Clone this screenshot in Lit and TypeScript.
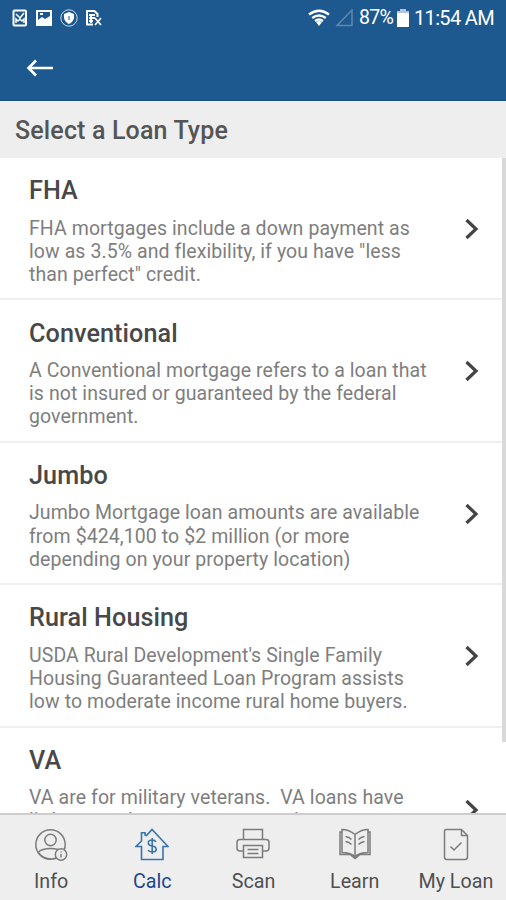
import { LitElement, html, css, svg } from "lit";
import { customElement } from "lit/decorators.js";

interface Loan { name: string; lines: string[]; }

const loans: Loan[] = [
  { name: "FHA", lines: ["FHA mortgages include a down payment as", "low as 3.5% and flexibility, if you have \"less", "than perfect\" credit."] },
  { name: "Conventional", lines: ["A Conventional mortgage refers to a loan that", "is not insured or guaranteed by the federal", "government."] },
  { name: "Jumbo", lines: ["Jumbo Mortgage loan amounts are available", "from $424,100 to $2 million (or more", "depending on your property location)"] },
  { name: "Rural Housing", lines: ["USDA Rural Development's Single Family", "Housing Guaranteed Loan Program assists", "low to moderate income rural home buyers."] },
  { name: "VA", lines: ["VA are for military veterans.\u00a0 VA loans have", "little or no down payment requirements"] },
];

const tabs = [
  { label: "Info", icon: svg`<circle cx="16.5" cy="16.5" r="14.7"/><circle cx="16.5" cy="12" r="5.7"/><path d="M4 24.5Q8 20.5 16.5 20.5Q21 20.5 24 21.5M4 24.5Q9 31 17 31"/><circle cx="27" cy="26.5" r="5.7" class="fill"/><path d="M27 26v3.5M27 23.5v1"/>` },
  { label: "Calc", icon: svg`<path d="M6.500 18.500H1L6.500 13V4.800H10V7L11.500 7.500L17 1.500L33 18.500H28V31.500H6.500Z"/><path d="M21 14Q20 12 17 12Q13.300 12 13.300 15Q13.300 17.500 17 18Q21.200 18.500 21.200 21.500Q21.200 24 17.200 24Q14 24 13 22M17.200 10V26"/>` },
  { label: "Scan", icon: svg`<path d="M7.500 11.500V1.500H26.500V11.500M7.500 23H4Q1 23 1 20V14.500Q1 11.500 4 11.500H30Q33 11.500 33 14.500V20Q33 23 30 23H26.500M7.500 17.500H26.500V29.500H7.500ZM11.500 21.500H22.500M11.500 25.500H22.500"/>` },
  { label: "Learn", icon: svg`<path d="M17 6.500Q11 1.500 4 1.500V24.500Q12 24.500 17 28.500Q22 24.500 30 24.500V1.500Q23 1.500 17 6.500V28.500M4 4H2V26.500H12L17 30.500L22 26.500H32V4H30M7.500 8.500Q11 9 13.500 11.500M7.500 13.500Q11 14 13.500 16.500M26.500 8.500Q23 9 20.500 11.500M26.500 13.500Q23 14 20.500 16.500"/>` },
  { label: "My Loan", icon: svg`<path d="M7 1.500H22.500L28.500 7.500V29Q28.500 31.500 26 31.500H7.500Q5.500 31.500 5.500 29V3Q5.500 1.500 7 1.500ZM22.500 1.500V7.500H28.500M11.500 18.500L15 22L22.500 14.500"/>` },
];

@customElement("loan-row")
class LoanRow extends LitElement {
  static properties = { loan: { attribute: false }, tall: { type: Boolean, reflect: true } };
  declare loan: Loan;
  declare tall: boolean;
  static styles = css`
    :host { display: flex; box-sizing: border-box; height: 142.400px; flex: none; padding: 18.300px 27px 0 29px; border-bottom: 2px solid #f0f0f0; justify-content: space-between; }
    :host([tall]) { height: 165.500px; }
    .name { font-size: 25.200px; line-height: 30px; font-weight: 500; color: #484848; margin-bottom: 10.300px; letter-spacing: .08px; }
    .line { font-size: 19.500px; line-height: 23.200px; color: #7e7e7e; white-space: nowrap; letter-spacing: .08px; }
    .chevron { width: 14px; height: 22px; margin-bottom: 16.500px; align-self: center; fill: none; stroke: #444; stroke-width: 3.200; }
  `;
  render() {
    return html`<div><div class="name">${this.loan.name}</div>${this.loan.lines.map(l => html`<div class="line">${l}</div>`)}</div>
      <svg class="chevron" viewBox="0 0 14 22"><path d="M1.500 2L11 11L1.500 20"/></svg>`;
  }
}

@customElement("app-root")
class AppRoot extends LitElement {
  static styles = css`
    :host { display: flex; flex-direction: column; height: 900px; width: 506px; overflow: hidden; background: #fff; font-family: Roboto, sans-serif; }
    .header { height: 101px; flex: none; background: #1d598f; color: #fff; box-sizing: border-box; border-bottom: 1px solid #174f86; }
    .status { height: 35px; display: flex; justify-content: space-between; padding: 0 12px 0 12px; }
    .left, .right { display: flex; align-items: center; }
    .left svg, .right svg, .back { fill: none; stroke: #fff; display: block; }
    .left { gap: 7px; }
    .right { white-space: nowrap; }
    .pct { font-size: 19.500px; letter-spacing: -.7px; width: 34px; margin-left: 6px; }
    .time { font-size: 20px; letter-spacing: -.65px; width: 80px; margin-left: 5px; }
    .signal { margin-left: 5px; }
    .battery { margin-left: 4px; }
    .back { margin: 24px 0 0 26px; stroke-width: 2.600; }
    .title { height: 57px; flex: none; background: #eee; color: #555; font-size: 25px; letter-spacing: .15px; line-height: 60px; padding-left: 15px; font-weight: 500; }
    .body { flex: 1; min-height: 0; overflow: hidden; display: flex; align-items: flex-start; }
    .list { flex: 1; margin-right: -4px; display: flex; flex-direction: column; }
    .bar { width: 4px; height: 584px; background: #d9d9d9; position: relative; }
    .tabs { height: 87px; flex: none; box-sizing: border-box; border-top: 2px solid #cdcdcd; background: #eee; display: grid; grid-template-columns: repeat(5, 1fr); }
    .tab { display: flex; flex-direction: column; align-items: center; color: #505050; padding: 13px 0 0 1px; font-size: 19.700px; line-height: 24px; }
    .tab svg { width: 34px; height: 33px; fill: none; stroke: #7c7c7c; stroke-width: 1.500; margin-bottom: 9px; }
    .tab .fill { fill: #eee; }
    .tab.active { color: #1c4790; }
    .tab.active svg { stroke: #3974ae; stroke-width: 1.600; }
  `;
  render() {
    return html`
      <div class="header">
        <div class="status">
          <div class="left">
            <svg width="16" height="18" viewBox="0 0 16 18"><rect x="1.500" y="1.500" width="12.500" height="15" rx="1" stroke-width="2"/><path d="M4 5L8 9L12 4M4 14V10L6 12L8 10L10 12L12 10V14" stroke-width="1.500"/></svg>
            <svg width="18" height="18" viewBox="0 0 18 18"><path fill-rule="evenodd" fill="#fff" stroke="none" d="M1 1H17V17H1ZM3 3V11L7 8L10 10L15 7V3ZM5 4H8V6H5Z"/></svg>
            <svg width="18" height="18" viewBox="0 0 18 18"><circle cx="9" cy="9" r="8.200" stroke-opacity=".75"/><path fill="#fff" stroke="none" d="M9 3L14 5V9Q13 13 9 15Q5 13 4 9V5Z"/><path d="M9 7v4" stroke="#1d598f"/></svg>
            <svg width="18" height="18" viewBox="0 0 18 18"><path d="M12.500 8V5L9.500 2H2V15.500H8M4 6H10M4 9H10M4 12H8M6 6V14" stroke-width="2"/><path d="M10 9L16 16M16 9L10 16" stroke-width="1.600"/></svg>
          </div>
          <div class="right">
            <svg width="22" height="18" viewBox="0 0 22 18"><path d="M1 5.500Q11-2 21 5.500M4.200 9Q11 4 17.800 9M7 12Q11 9 15 12" stroke-width="2.200"/><path fill="#fff" stroke="none" d="M8 13Q11 11 14 13L11 17Z"/></svg>
            <svg class="signal" width="18" height="18" viewBox="0 0 18 18"><path d="M17 1V16.500H2Z" stroke="#5f87b0" stroke-width="1.500"/></svg>
            <span class="pct">87%</span>
            <svg class="battery" width="12" height="18" viewBox="0 0 12 18"><path fill="#fff" stroke="none" d="M0 3H12V18H0Z"/><path fill="#b5c6da" stroke="none" d="M3 0H9V2H12V4H0V2H3Z"/></svg>
            <span class="time">11:54 AM</span>
          </div>
        </div>
        <svg class="back" width="28" height="18" viewBox="0 0 28 18"><path d="M27 9H2.500M10 1.500L2.500 9L10 16.500"/></svg>
      </div>
      <div class="title">Select a Loan Type</div>
      <div class="body"><div class="list">${loans.map(l => html`<loan-row .loan=${l} ?tall=${l.name === "VA"}></loan-row>`)}</div><div class="bar"></div></div>
      <div class="tabs">${tabs.map(t => html`<div class="tab ${t.label === "Calc" ? "active" : ""}"><svg viewBox="0 0 34 33">${t.icon}</svg>${t.label}</div>`)}</div>`;
  }
}
